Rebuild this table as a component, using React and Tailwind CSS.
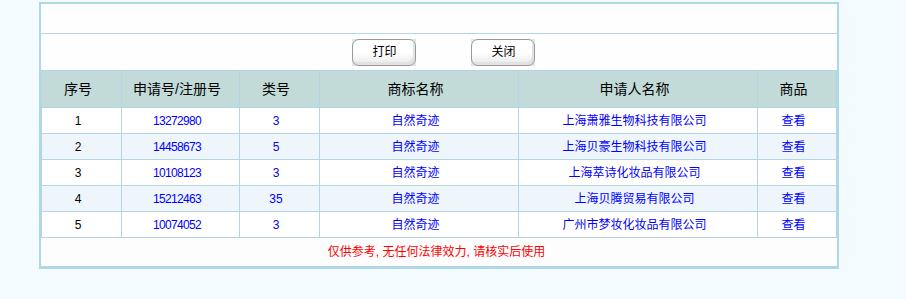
const rows = [
  { no: 1, reg: "13272980", cls: "3", mark: "自然奇迹", owner: "上海萧雅生物科技有限公司" },
  { no: 2, reg: "14458673", cls: "5", mark: "自然奇迹", owner: "上海贝豪生物科技有限公司" },
  { no: 3, reg: "10108123", cls: "3", mark: "自然奇迹", owner: "上海萃诗化妆品有限公司" },
  { no: 4, reg: "15212463", cls: "35", mark: "自然奇迹", owner: "上海贝腾贸易有限公司" },
  { no: 5, reg: "10074052", cls: "3", mark: "自然奇迹", owner: "广州市梦妆化妆品有限公司" },
];

const cols = ["w-[81px] border-l", "w-[118px]", "w-[80px]", "w-[199px]", "w-[239px]", "w-[79px]"];

function Cell({ i, children, className = "" }) {
  return (
    <div
      className={`${cols[i]} shrink-0 flex items-center justify-center pr-[7px] border-r border-[#b4d6e4] ${className}`}
    >
      {children}
    </div>
  );
}

function ImgButton({ label }) {
  return (
    <div className="bg-[#d6eaec] w-[64px] h-[27px]">
      <button className="w-full h-full rounded-[7px] border border-[#9a9a9a] bg-gradient-to-b from-white via-white to-[#e8e8e8] shadow-[inset_-2px_-3px_0_#e2e2e2] text-[12px] text-black pl-[2px]">
        {label}
      </button>
    </div>
  );
}

export default function App() {
  return (
    <div
      className="h-[299px] bg-[#f4fbfe] pt-[2px] pl-[39px]"
      style={{ fontFamily: '"Liberation Sans", "Noto Sans CJK SC", sans-serif' }}
    >
      <div className="w-[800px] border-2 border-[#add8e6] bg-white">
        <div className="h-[30px] border-b border-[#b4d6e4] bg-[#fefefe]" />
        <div className="h-[37px] border-b border-[#b4d6e4] flex items-center justify-center gap-[55px] pl-2 bg-[#fefefe]">
          <ImgButton label="打印" />
          <ImgButton label="关闭" />
        </div>

        <div className="flex h-[37px] border-b border-[#b4d6e4] bg-[#c2dbd9] text-[14px] text-black">
          <Cell i={0}>序号</Cell>
          <Cell i={1}>申请号/注册号</Cell>
          <Cell i={2}>类号</Cell>
          <Cell i={3}>商标名称</Cell>
          <Cell i={4}>申请人名称</Cell>
          <Cell i={5}>商品</Cell>
        </div>

        {rows.map((r, idx) => (
          <div
            key={r.no}
            className={`flex h-[26px] border-b border-[#b4d6e4] text-[12px] text-[#0000ff] ${
              idx % 2 === 1 ? "bg-[#eef6fc]" : "bg-white"
            }`}
          >
            <Cell i={0} className="text-black">{r.no}</Cell>
            <Cell i={1} className="tracking-[-0.7px]">{r.reg}</Cell>
            <Cell i={2}>{r.cls}</Cell>
            <Cell i={3}>{r.mark}</Cell>
            <Cell i={4}>{r.owner}</Cell>
            <Cell i={5}>查看</Cell>
          </div>
        ))}

        <div className="h-[29px] border-b border-[#b4d6e4] bg-[#fdfdfd] flex items-center justify-center pr-[5px] text-[12px] text-[#ff0000]">
          仅供参考, 无任何法律效力, 请核实后使用
        </div>
      </div>
    </div>
  );
}
